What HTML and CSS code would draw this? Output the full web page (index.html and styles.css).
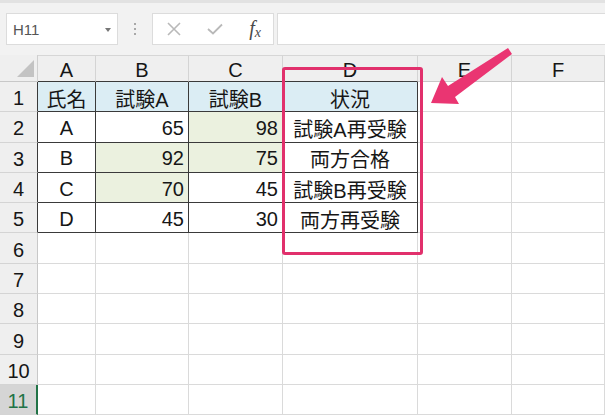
FILE: index.html
```html
<!DOCTYPE html>
<html lang="ja">
<head>
<meta charset="utf-8">
<link rel="stylesheet" href="styles.css">
</head>
<body>
<div class="app">
  <div class="toolbar">
    <div class="namebox"><span class="ref">H11</span><span class="dd"></span></div>
    <div class="grip"><i></i><i></i><i></i></div>
    <div class="fbtns">
      <svg class="ic" width="14" height="14" viewBox="0 0 14 14"><path d="M1 1L13 13M13 1L1 13" stroke="#b9b9b9" stroke-width="1.6" fill="none"/></svg>
      <svg class="ic" width="16" height="12" viewBox="0 0 16 12"><path d="M1 6L6 10.5L15 1.5" stroke="#b9b9b9" stroke-width="1.8" fill="none"/></svg>
      <span class="fx">f<sub>x</sub></span>
    </div>
    <div class="finput"></div>
  </div>
  <div class="sheet">
    <div class="corner"><span class="tri"></span></div>
    <div class="ch tb">A</div><div class="ch tb">B</div><div class="ch tb">C</div><div class="ch tb">D</div><div class="ch">E</div><div class="ch">F</div>

    <div class="rh tb">1</div><div class="c t hd ctr">氏名</div><div class="c t hd ctr">試験A</div><div class="c t hd ctr">試験B</div><div class="c t hd ctr">状況</div><div class="c"></div><div class="c"></div>
    <div class="rh tb">2</div><div class="c t ctr">A</div><div class="c t num">65</div><div class="c t g num">98</div><div class="c t ctr">試験A再受験</div><div class="c"></div><div class="c"></div>
    <div class="rh tb">3</div><div class="c t ctr">B</div><div class="c t g num">92</div><div class="c t g num">75</div><div class="c t ctr">両方合格</div><div class="c"></div><div class="c"></div>
    <div class="rh tb">4</div><div class="c t ctr">C</div><div class="c t g num">70</div><div class="c t num">45</div><div class="c t ctr">試験B再受験</div><div class="c"></div><div class="c"></div>
    <div class="rh tb">5</div><div class="c t ctr">D</div><div class="c t num">45</div><div class="c t num">30</div><div class="c t ctr">両方再受験</div><div class="c"></div><div class="c"></div>
    <div class="rh">6</div><div class="c"></div><div class="c"></div><div class="c"></div><div class="c"></div><div class="c"></div><div class="c"></div>
    <div class="rh">7</div><div class="c"></div><div class="c"></div><div class="c"></div><div class="c"></div><div class="c"></div><div class="c"></div>
    <div class="rh">8</div><div class="c"></div><div class="c"></div><div class="c"></div><div class="c"></div><div class="c"></div><div class="c"></div>
    <div class="rh">9</div><div class="c"></div><div class="c"></div><div class="c"></div><div class="c"></div><div class="c"></div><div class="c"></div>
    <div class="rh">10</div><div class="c"></div><div class="c"></div><div class="c"></div><div class="c"></div><div class="c"></div><div class="c"></div>
    <div class="rh sel">11</div><div class="c"></div><div class="c"></div><div class="c"></div><div class="c"></div><div class="c"></div><div class="c"></div>
  </div>
  <div class="highlight"></div>
  <svg class="arrow" width="605" height="417" viewBox="0 0 605 417">
    <polygon points="431,103 442,77 448,86 508,48 512,54 455,97 459,104" fill="#ea3572"/>
  </svg>
</div>
</body>
</html>
```

FILE: styles.css
```css
* { box-sizing: border-box; }
html, body { margin: 0; padding: 0; background: #ffffff; }
body {
  width: 605px;
  height: 417px;
  overflow: hidden;
  font-family: "Liberation Sans", "Noto Sans CJK JP", sans-serif;
  color: #161616;
}
.app { position: relative; width: 605px; height: 417px; overflow: hidden; }

.toolbar {
  height: 55px;
  background: #f2f2f2;
  border-top: 3px solid #e2e2e2;
  display: flex;
  align-items: flex-start;
  padding-top: 10px;
}
.namebox {
  margin-left: 6px;
  width: 112px;
  height: 32px;
  background: #fff;
  border: 1px solid #dcdcdc;
  display: flex;
  align-items: center;
  justify-content: space-between;
  padding: 1px 6px 0 6px;
}
.ref { font-size: 15px; color: #555; }
.dd {
  width: 0; height: 0;
  border-left: 3px solid transparent;
  border-right: 3px solid transparent;
  border-top: 4px solid #777;
}
.grip {
  width: 34px;
  height: 32px;
  display: flex;
  flex-direction: column;
  align-items: center;
  justify-content: center;
  gap: 3px;
}
.grip i { display: block; width: 2px; height: 2px; background: #a8a8a8; }
.fbtns {
  width: 122px;
  height: 32px;
  background: #fff;
  border: 1px solid #dcdcdc;
  display: flex;
  align-items: center;
  padding: 0 12px 0 14px;
  justify-content: space-between;
}
.ic { display: block; }
.fx {
  font-family: "Liberation Serif", "DejaVu Serif", serif;
  font-style: italic;
  font-size: 20px;
  color: #4a4a4a;
  line-height: 1;
}
.fx sub { font-size: 14px; vertical-align: -2px; }
.finput {
  margin-left: 3px;
  flex: 1;
  height: 32px;
  background: #fff;
  border: 1px solid #dcdcdc;
  border-right: none;
}

.sheet {
  display: grid;
  grid-template-columns: 38px 58px 93px 94px 135px 94px 93px;
  grid-template-rows: 27px repeat(11, 30.3px);
}
.corner {
  background: #efefef;
  border-right: 1px solid #cfcfcf;
  border-bottom: 1px solid #c8c8c8;
  position: relative;
}
.tri {
  position: absolute;
  right: 3px;
  bottom: 4px;
  width: 0; height: 0;
  border-left: 17px solid transparent;
  border-bottom: 17px solid #c3c3c3;
}
.ch {
  background: #efefef;
  border-top: 1px solid #d6d6d6;
  border-right: 1px solid #d4d4d4;
  border-bottom: 1px solid #c8c8c8;
  display: flex;
  align-items: center;
  justify-content: center;
  font-size: 20px;
  padding-top: 3px;
}
.ch.tb { border-bottom-color: #3a3a3a; }
.rh {
  background: #efefef;
  border-right: 1px solid #c8c8c8;
  border-bottom: 1px solid #d4d4d4;
  display: flex;
  align-items: center;
  justify-content: center;
  font-size: 20px;
  padding-top: 4px;
}
.rh.tb { border-right-color: #3a3a3a; }
.rh.sel {
  background: #d5d5d5;
  color: #217346;
  border-right: 2px solid #217346;
}
.c {
  border-right: 1px solid #dadada;
  border-bottom: 1px solid #dadada;
  display: flex;
  align-items: center;
  font-size: 20px;
  padding-top: 3px;
  white-space: nowrap;
}
.c.t { border-right-color: #3a3a3a; border-bottom-color: #3a3a3a; }
.ctr { justify-content: center; }
.num { justify-content: flex-end; padding-right: 4px; }
.hd { background: #dbedf4; }
.g { background: #ebf1df; }

.highlight {
  position: absolute;
  left: 282px;
  top: 67px;
  width: 141px;
  height: 188px;
  border: 3px solid #e1306c;
  border-radius: 3px;
}
.arrow { position: absolute; left: 0; top: 0; }
```
